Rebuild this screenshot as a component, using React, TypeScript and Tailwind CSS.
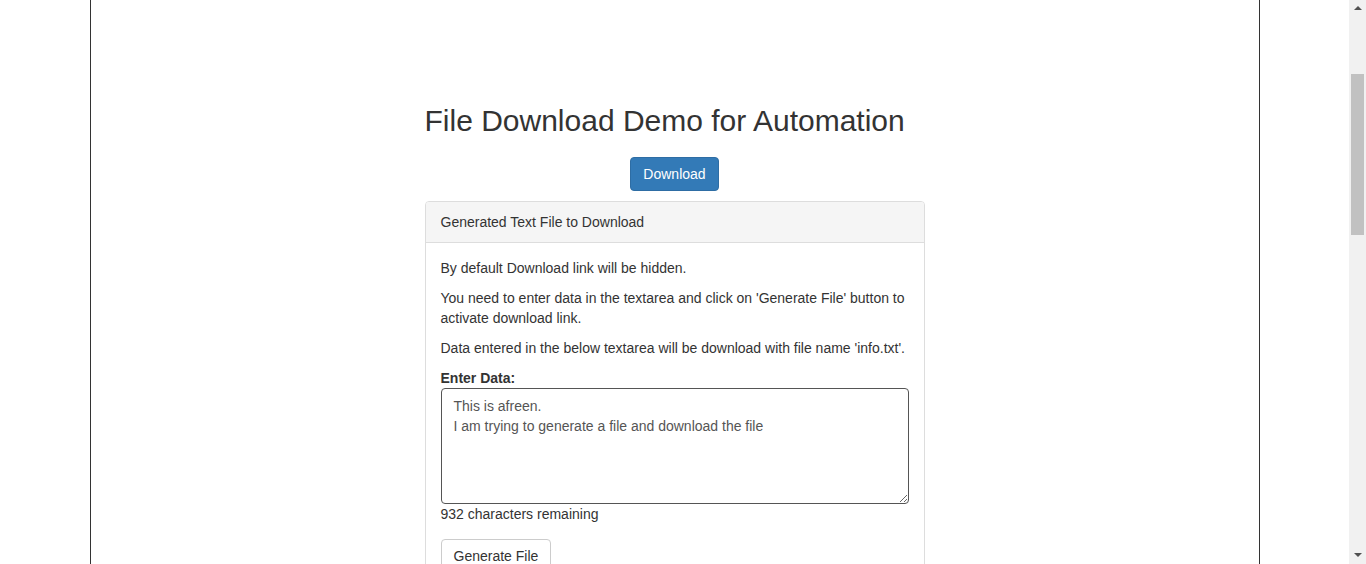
import React from "react";

export default function App() {
  return (
    <div
      className="flex h-[564px] w-[1366px] overflow-hidden bg-white text-[14px] leading-[20px] text-[#333]"
      style={{ fontFamily: '"Liberation Sans", Arial, Helvetica, sans-serif' }}
    >
      <div className="flex flex-1 justify-center">
        <div className="flex h-full w-[1170px] justify-center border-x border-[#333]">
          <div className="flex w-[500px] flex-col pt-[104px]">
            <h2 className="text-[30px] font-normal leading-[33px] text-[#333]">
              File Download Demo for Automation
            </h2>
            <div className="mt-[20px] flex justify-center">
              <button className="h-[34px] rounded-[4px] border border-[#2e6da4] bg-[#337ab7] px-[12px] text-[14px] leading-[20px] text-white">
                Download
              </button>
            </div>
            <div className="mt-[10px] rounded-[4px] border border-[#ddd] bg-white">
              <div className="rounded-t-[3px] border-b border-[#ddd] bg-[#f5f5f5] px-[15px] py-[10px]">
                Generated Text File to Download
              </div>
              <div className="p-[15px]">
                <p className="mb-[10px]">By default Download link will be hidden.</p>
                <p className="mb-[10px]">
                  You need to enter data in the textarea and click on 'Generate File' button to
                  activate download link.
                </p>
                <p className="mb-[10px]">
                  Data entered in the below textarea will be download with file name 'info.txt'.
                </p>
                <label className="block font-bold">Enter Data:</label>
                <textarea
                  className="block h-[116px] w-full rounded-[4px] border border-[#555] bg-white px-[12px] pt-[7px] pb-[5px] text-[14px] leading-[20px] text-[#555]"
                  style={{ fontFamily: '"Liberation Sans", Arial, Helvetica, sans-serif' }}
                  defaultValue={"This is afreen.\nI am trying to generate a file and download the file"}
                />
                <div>932 characters remaining</div>
                <button className="mt-[15px] h-[34px] rounded-[4px] border border-[#ccc] bg-white px-[12px] text-[14px] leading-[20px] text-[#333]">
                  Generate File
                </button>
              </div>
            </div>
          </div>
        </div>
      </div>
      <div className="flex w-[17px] flex-col items-center bg-[#f1f1f1]">
        <div className="flex h-[17px] w-full items-center justify-center">
          <svg width="8" height="5" viewBox="0 0 8 5">
            <path d="M4 0 L8 4 L0 4 Z" fill="#505050" />
          </svg>
        </div>
        <div className="mt-[57px] h-[161px] w-[13px] bg-[#c1c1c1]" />
        <div className="flex-1" />
        <div className="flex h-[17px] w-full items-center justify-center">
          <svg width="8" height="5" viewBox="0 0 8 5">
            <path d="M0 0 L8 0 L4 4 Z" fill="#505050" />
          </svg>
        </div>
      </div>
    </div>
  );
}
